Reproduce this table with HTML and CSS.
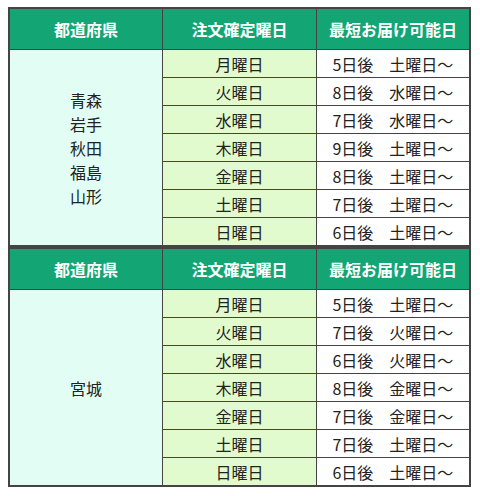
FILE: index.html
```html
<!DOCTYPE html>
<html lang="ja">
<head>
<meta charset="utf-8">
<link rel="stylesheet" href="styles.css">
</head>
<body>
<table class="ship">
  <tr class="head"><th>都道府県</th><th>注文確定曜日</th><th>最短お届け可能日</th></tr>
  <tr><td class="pref" rowspan="7">青森<br>岩手<br>秋田<br>福島<br>山形</td><td class="day">月曜日</td><td class="eta">5日後　土曜日～</td></tr>
  <tr><td class="day">火曜日</td><td class="eta">8日後　水曜日～</td></tr>
  <tr><td class="day">水曜日</td><td class="eta">7日後　水曜日～</td></tr>
  <tr><td class="day">木曜日</td><td class="eta">9日後　土曜日～</td></tr>
  <tr><td class="day">金曜日</td><td class="eta">8日後　土曜日～</td></tr>
  <tr><td class="day">土曜日</td><td class="eta">7日後　土曜日～</td></tr>
  <tr><td class="day">日曜日</td><td class="eta">6日後　土曜日～</td></tr>
</table>
<table class="ship">
  <tr class="head"><th>都道府県</th><th>注文確定曜日</th><th>最短お届け可能日</th></tr>
  <tr><td class="pref" rowspan="7">宮城</td><td class="day">月曜日</td><td class="eta">5日後　土曜日～</td></tr>
  <tr><td class="day">火曜日</td><td class="eta">7日後　火曜日～</td></tr>
  <tr><td class="day">水曜日</td><td class="eta">6日後　火曜日～</td></tr>
  <tr><td class="day">木曜日</td><td class="eta">8日後　金曜日～</td></tr>
  <tr><td class="day">金曜日</td><td class="eta">7日後　金曜日～</td></tr>
  <tr><td class="day">土曜日</td><td class="eta">7日後　土曜日～</td></tr>
  <tr><td class="day">日曜日</td><td class="eta">6日後　土曜日～</td></tr>
</table>
</body>
</html>
```
FILE: styles.css
```css
html, body {
  margin: 0;
  padding: 0;
  background: #ffffff;
}
body {
  padding: 7px 8px 0 8px;
  font-family: "Noto Sans CJK JP", "Noto Sans", sans-serif;
  color: #222;
}
.ship {
  border-collapse: collapse;
  width: 463px;
  table-layout: fixed;
  border: 2px solid #444;
}
.ship th, .ship td {
  border: 1px solid #444;
  text-align: center;
  padding: 0;
  font-size: 16px;
}
.ship th {
  background: #13a573;
  color: #fff;
  font-weight: bold;
  height: 40px;
  line-height: 20px;
}
.ship td {
  height: 27px;
  line-height: 20px;
}
.ship .pref {
  background: #e2fdf3;
  line-height: 24px;
}
.ship .day {
  background: #e1fbcf;
}
.ship .eta {
  background: #fff;
}
```
